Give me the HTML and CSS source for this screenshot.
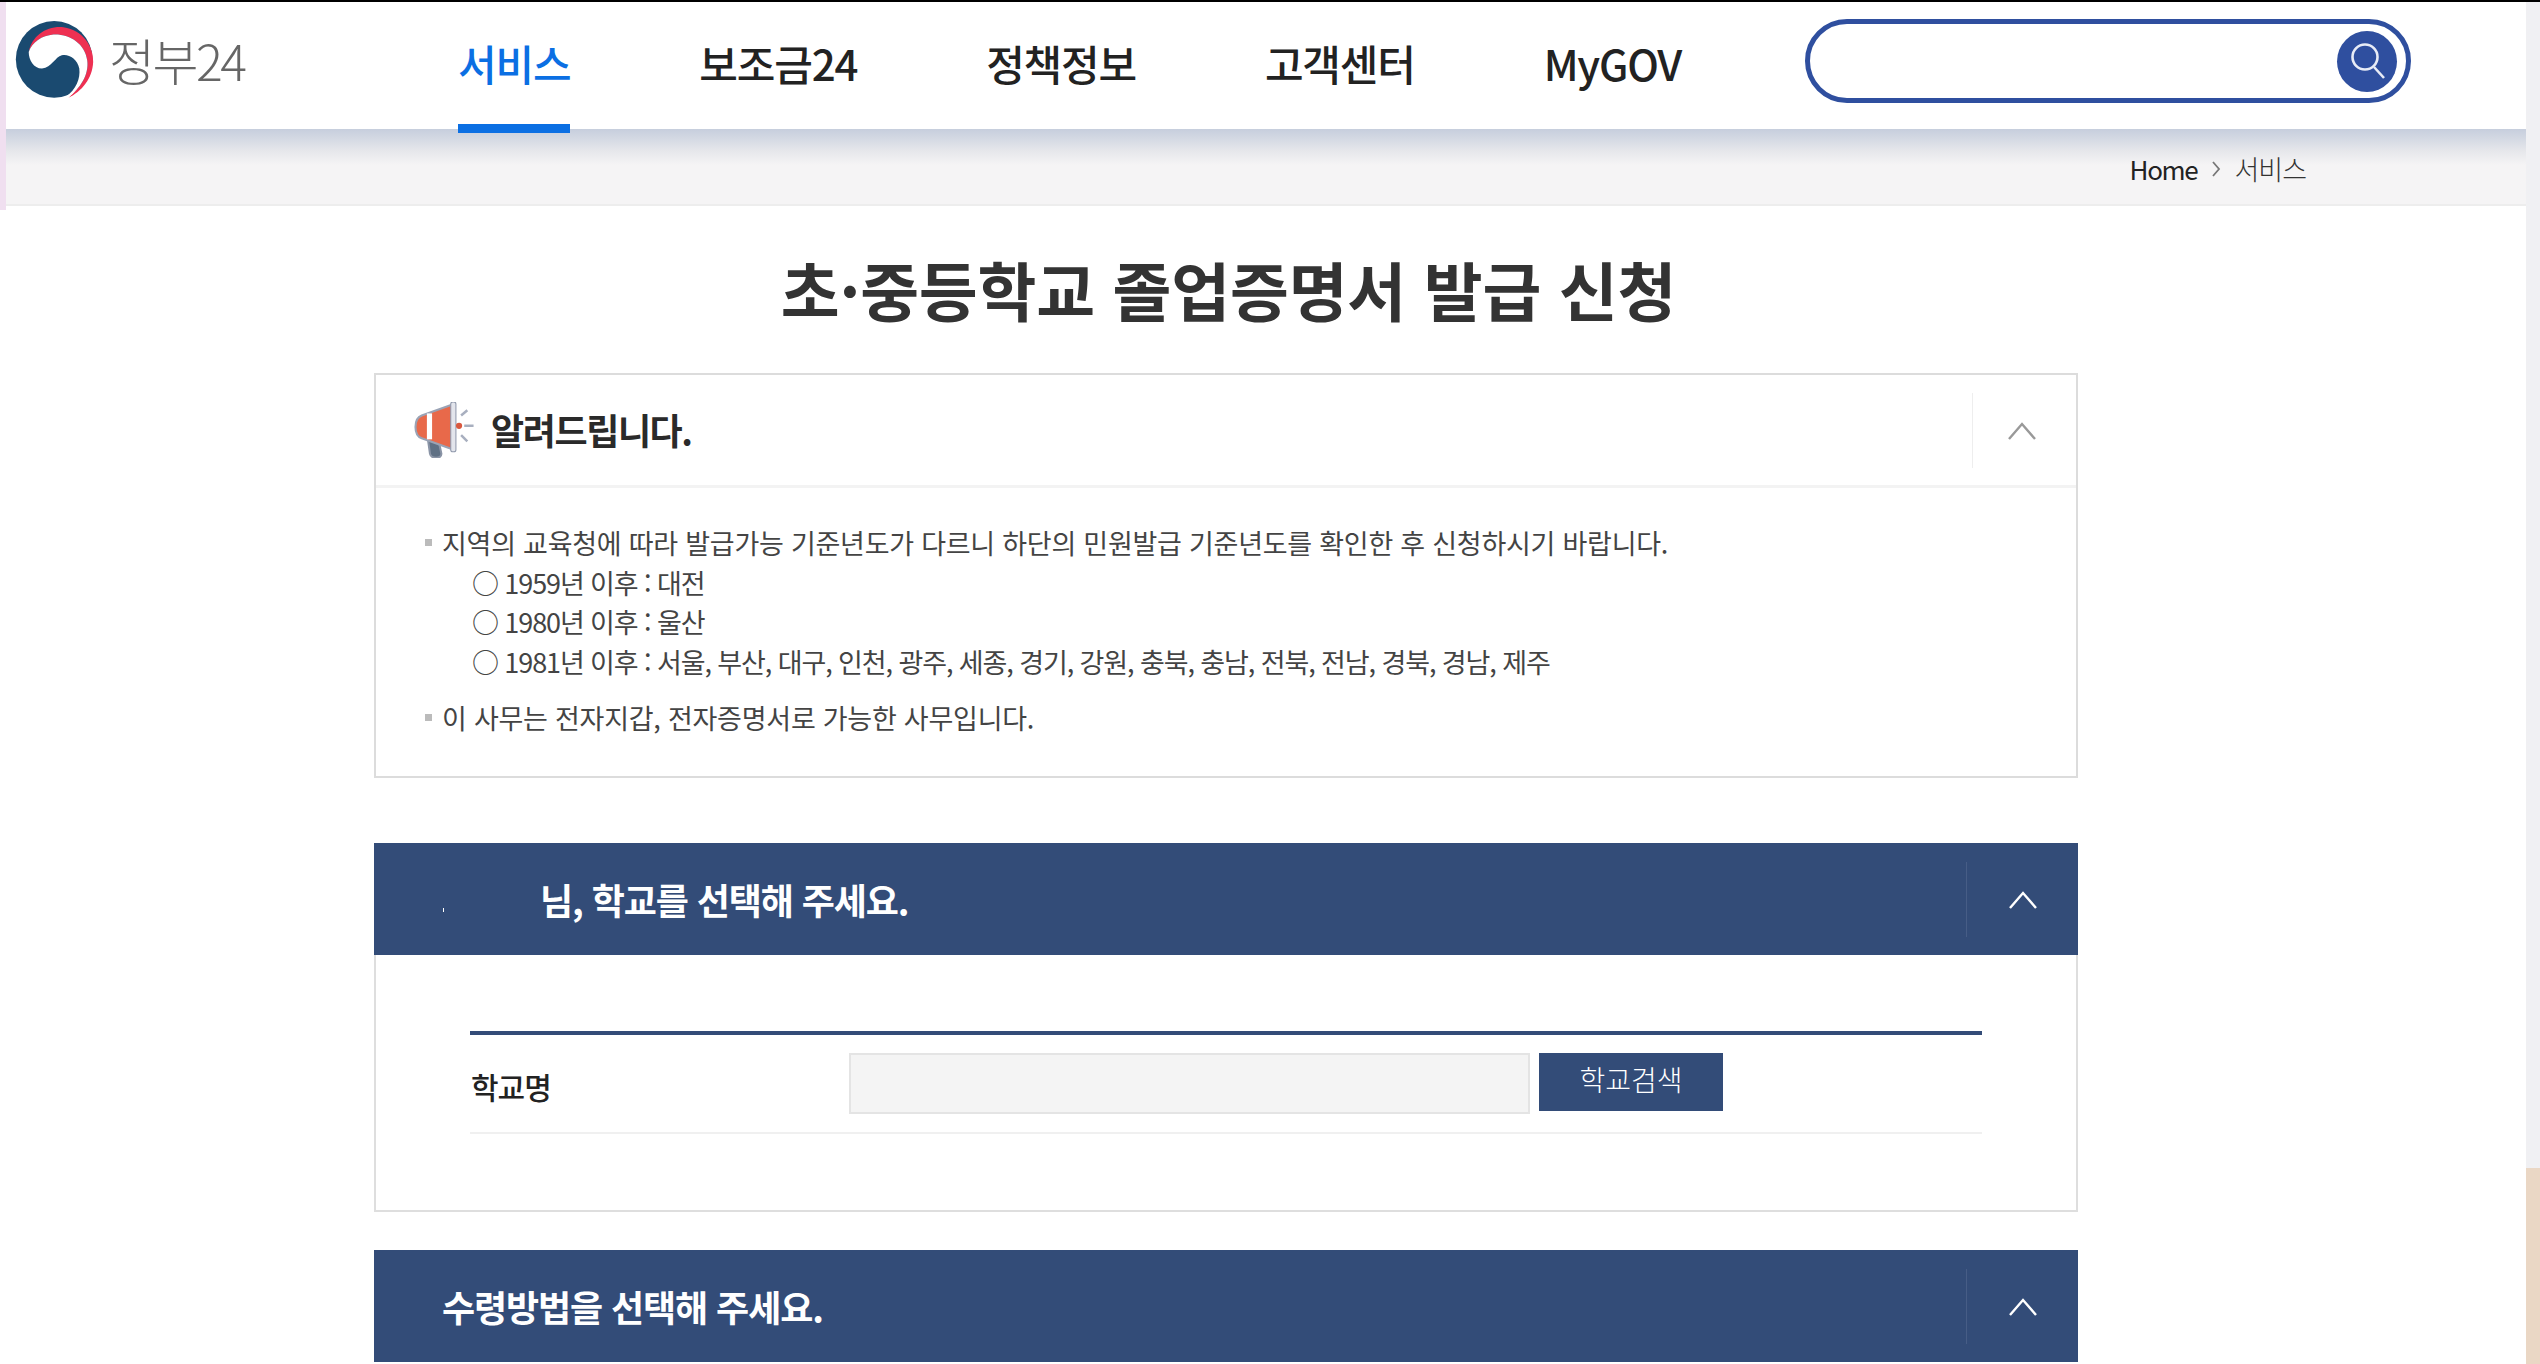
FILE: index.html
```html
<!DOCTYPE html>
<html lang="ko">
<head>
<meta charset="utf-8">
<title>초·중등학교 졸업증명서 발급 신청</title>
<link rel="stylesheet" href="styles.css">
</head>
<body>
<div class="screen">
  <div class="edge"></div>
  <div class="page">
    <header class="header">
      <a class="logo">
        <svg class="logo-mark" viewBox="45 31 236 233">
          <circle cx="162" cy="147" r="116" fill="#1a4a70"/>
          <path d="M85 125C95 75 140 45 190 50C250 58 282 110 280 155C278 205 245 245 205 263C240 235 268 195 262 150C255 100 210 70 160 72C125 75 95 95 85 125Z" fill="#ee3052"/>
          <path d="M85 125C95 95 125 75 160 72C210 70 255 100 262 150C268 195 240 235 205 263L198 259C228 240 242 205 238 175C232 145 205 130 185 135C165 140 155 172 125 175C100 175 85 150 85 125Z" fill="#fff"/>
        </svg>
        <span class="logo-text">정부24</span>
      </a>
      <nav class="nav">
        <a class="nav-item active">서비스</a>
        <a class="nav-item">보조금24</a>
        <a class="nav-item">정책정보</a>
        <a class="nav-item">고객센터</a>
        <a class="nav-item">MyGOV</a>
      </nav>
      <div class="search">
        <input class="search-input" type="text" aria-label="검색">
        <button class="search-btn" aria-label="검색">
          <svg viewBox="0 0 60 60" class="search-icon"><circle cx="28" cy="26" r="12.5"/><path d="M37 36L47 47"/></svg>
        </button>
      </div>
    </header>
    <div class="crumbs"><span class="crumb-home">Home</span>
      <svg class="crumb-sep" viewBox="0 0 10 16"><path d="M2 1L8 8L2 15"/></svg>
      <span class="crumb-cur">서비스</span></div>
    <main class="main">
      <h1 class="title">초·중등학교 졸업증명서 발급 신청</h1>
      <section class="notice">
        <div class="notice-head">
          <svg class="horn" viewBox="1 0 59 54">
            <path d="M15 36L25 36L28 50C28 55 18 55 17 50Z" fill="#5f7084" stroke="#8a94a6" stroke-width="2"/>
            <path d="M9 13L40 2L40 46L9 35C1 32 1 16 9 13Z" fill="#e8694a" stroke="#9aa3b5" stroke-width="2"/>
            <rect x="14" y="11" width="5" height="25" fill="#fff"/>
            <rect x="37" y="0" width="5" height="48" rx="2" fill="#e3e5ec" stroke="#8f98ab" stroke-width="1"/>
            <circle cx="45" cy="23" r="3" fill="#d9583f"/>
            <path d="M47 13L53 8M50 23L59 23M47 32L53 38" stroke="#a8afbf" stroke-width="2.4" fill="none"/>
          </svg>
          <h2 class="notice-title">알려드립니다.</h2>
          <div class="toggle toggle-light">
            <svg class="chev" viewBox="0 0 28 18"><path d="M1 17L14 2L27 17"/></svg>
          </div>
        </div>
        <div class="notice-body">
          <p class="note">지역의 교육청에 따라 발급가능 기준년도가 다르니 하단의 민원발급 기준년도를 확인한 후 신청하시기 바랍니다.</p>
          <p class="sub">○ 1959년 이후 : 대전</p>
          <p class="sub">○ 1980년 이후 : 울산</p>
          <p class="sub">○ 1981년 이후 : 서울, 부산, 대구, 인천, 광주, 세종, 경기, 강원, 충북, 충남, 전북, 전남, 경북, 경남, 제주</p>
          <p class="note note-last">이 사무는 전자지갑, 전자증명서로 가능한 사무입니다.</p>
        </div>
      </section>
      <section class="panel">
        <div class="band">
          <span class="tick"></span>
          <h2 class="band-title band-title-name">님, 학교를 선택해 주세요.</h2>
          <div class="toggle toggle-dark">
            <svg class="chev" viewBox="0 0 28 18"><path d="M1 17L14 2L27 17"/></svg>
          </div>
        </div>
        <div class="panel-body">
          <div class="field-row">
            <label class="field-label">학교명</label>
            <input class="field-input" type="text" aria-label="학교명">
            <button class="field-btn">학교검색</button>
          </div>
        </div>
      </section>
      <section class="panel panel-next">
        <div class="band">
          <h2 class="band-title">수령방법을 선택해 주세요.</h2>
          <div class="toggle toggle-dark">
            <svg class="chev" viewBox="0 0 28 18"><path d="M1 17L14 2L27 17"/></svg>
          </div>
        </div>
      </section>
    </main>
  </div>
  <div class="scrollbar"><div class="scroll-thumb"></div></div>
</div>
</body>
</html>
```
FILE: styles.css
```css
* { box-sizing: border-box; }
html, body { margin: 0; height: 100%; overflow: hidden; background: #fff; }
body { font-family: "Noto Sans CJK KR", "Noto Sans", sans-serif; color: #333; }
h1, h2, p { margin: 0; font-weight: inherit; }
.screen { display: flex; height: 1364px; border-top: 2px solid #000; }
.edge { width: 6px; height: 208px; background: #f0dff0; flex: none; }
.page { flex: 1; min-width: 0; display: flex; flex-direction: column; }
.scrollbar { width: 14px; flex: none; background: #f0f0f3; padding-top: 1166px; }
.scroll-thumb { height: 196px; background: #ead7c5; }

.header { height: 127px; display: flex; align-items: flex-start; background: #fff; position: relative; }
.logo { display: flex; align-items: center; width: 452px; padding: 19px 0 0 9px; flex: none; }
.logo-mark { width: 79px; height: 77px; flex: none; }
.logo-text { margin-left: 15px; font-size: 50px; color: #666; letter-spacing: -2.5px; line-height: 77px; font-weight: 300; }
.nav { display: flex; gap: 129px; height: 131px; flex: none; width: 1347px; }
.nav-item { font-size: 42px; font-weight: 500; color: #222; line-height: 122px; letter-spacing: -1.2px; position: relative; white-space: nowrap; }
.nav-item.active { color: #0b6fe3; }
.nav-item.active::after { content: ""; position: absolute; left: 0; right: 0; top: 122px; height: 9px; background: #0b6fe3; }
.search { width: 606px; height: 84px; margin-top: 17px; border: 5px solid #2f4f9f; border-radius: 42px; display: flex; align-items: center; padding: 0 9px 0 30px; flex: none; }
.search-input { flex: 1; min-width: 0; border: 0; outline: 0; background: transparent; height: 100%; }
.search-btn { width: 60px; height: 61px; padding: 0; border: 0; border-radius: 50%; background: #2f4f9f; flex: none; display: flex; }
.search-icon { width: 60px; height: 60px; fill: none; stroke: #e8ecf6; stroke-width: 2.6; }

.crumbs { height: 77px; border-bottom: 2px solid #ededed; background: linear-gradient(#c6cedd 0, #e6e7eb 22px, #f5f4f5 36px); display: flex; align-items: center; justify-content: flex-end; padding: 4px 220px 0 0; font-size: 26px; color: #222; letter-spacing: -1.3px; }
.crumb-sep { width: 10px; height: 16px; margin: 0 13px 0 14px; fill: none; stroke: #777; stroke-width: 1.8; }
.crumb-cur { font-weight: 300; font-size: 27px; letter-spacing: -1px; color: #333; }

.main { width: 1704px; margin-left: 368px; }
.title { height: 167px; display: flex; align-items: center; justify-content: center; padding-left: 5px; padding-bottom: 4px; font-size: 64px; font-weight: 700; color: #333; letter-spacing: -0.2px; white-space: nowrap; }
.notice { height: 405px; border: 2px solid #dcdcdc; }
.notice-head { height: 113px; display: flex; align-items: center; border-bottom: 3px solid #f3f3f3; padding-left: 37px; }
.horn { width: 62px; height: 56px; flex: none; }
.notice-title { margin-left: 16px; padding-bottom: 2px; font-size: 36px; font-weight: 700; letter-spacing: -1.4px; color: #2a2a2a; flex: 1; }
.toggle { display: flex; align-items: center; justify-content: center; height: 75px; flex: none; }
.toggle-light { width: 104px; border-left: 1px solid #eee; padding: 2px 6px 0 0; }
.toggle-light .chev { stroke: #999; }
.toggle-dark { width: 112px; border-left: 1px solid #475d86; padding-top: 2px; }
.toggle-dark .chev { stroke: #fff; }
.chev { width: 28px; height: 18px; fill: none; stroke-width: 2.4; }
.notice-body { padding-top: 35px; padding-left: 66px; font-size: 27px; line-height: 39.5px; color: #444; white-space: nowrap; }
.note { position: relative; letter-spacing: -0.25px; }
.note::before { content: ""; position: absolute; left: -17px; top: 16px; width: 7px; height: 7px; background: #bbb; }
.note-last { margin-top: 16.5px; }
.sub { padding-left: 30px; letter-spacing: -1.1px; }

.panel { margin-top: 65px; height: 369px; border: 2px solid #dedede; border-top: 0; }
.panel-next { margin-top: 38px; height: 112px; border: 0; }
.band { margin: 0 -2px; height: 112px; background: #334c78; display: flex; align-items: center; padding-left: 68px; position: relative; }
.panel-next .band { margin: 0; }
.tick { position: absolute; left: 69px; top: 65px; width: 1px; height: 4px; background: #fff; }
.band-title { flex: 1; font-size: 36px; font-weight: 700; color: #fff; letter-spacing: -1.1px; }
.band-title-name { padding-left: 98px; }
.panel-body { padding: 76px 94px 0; }
.field-row { height: 103px; border-top: 4px solid #334c78; border-bottom: 2px solid #f0f0f0; display: flex; align-items: flex-start; padding-top: 18px; }
.field-label { width: 379px; flex: none; padding-left: 1px; font-size: 30px; font-weight: 500; line-height: 66px; letter-spacing: -1px; color: #222; }
.field-input { width: 681px; height: 61px; border: 2px solid #e4e4e4; background: #f4f4f4; flex: none; outline: 0; }
.field-btn { width: 184px; height: 58px; margin-left: 9px; border: 0; background: #334c78; color: #fff; font: 300 28px "Noto Sans CJK KR", sans-serif; letter-spacing: 0; padding: 0 0 6px; flex: none; }
```
